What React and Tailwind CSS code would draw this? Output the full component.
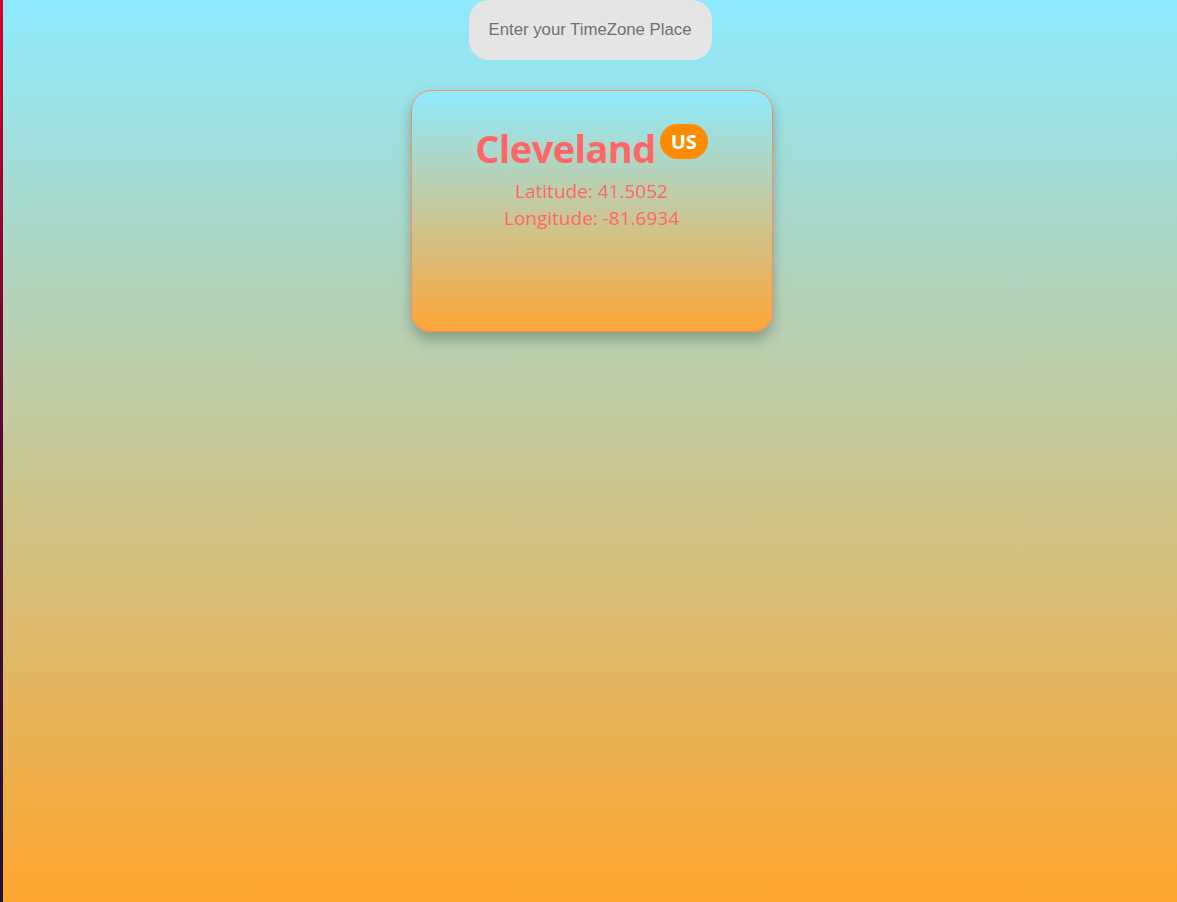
import React, { useState } from 'react';

const App = () => {
    const [place, setPlace] = useState('');

    return (
        <div className="flex min-h-[902px] w-full">
            {/* thin edge on the left */}
            <div className="w-[3px] shrink-0 bg-[linear-gradient(to_bottom,#d8002e,#5a0a2e_45%,#181232)]" />

            <div className="flex flex-1 flex-col items-center bg-[linear-gradient(to_bottom,#8eeafe,#ffa62e)]">
                <input
                    type="text"
                    value={place}
                    onChange={(e) => setPlace(e.target.value)}
                    placeholder="Enter your TimeZone Place"
                    className="h-[60px] w-[243px] rounded-[20px] bg-[#e5e5e5] px-5 text-[16.75px] text-[#444] placeholder-[#707070] outline-none"
                    style={{ fontFamily: '"Liberation Sans", Arial, sans-serif' }}
                />

                <div className="ml-[3px] mt-[30px] flex h-[242px] w-[362px] flex-col items-center rounded-[20px] border border-[#ff8a5c] bg-[linear-gradient(to_bottom,#8eeafe,#ffa638)] pt-[33px] shadow-[0_8px_14px_rgba(0,0,0,0.25)] [font-family:'Open_Sans',sans-serif]">
                    <div className="flex items-start">
                        <h1 className="mt-[2px] text-[38px] font-bold leading-[44px] tracking-[-0.6px] text-[#ff6767]">Cleveland</h1>
                        <span className="ml-[4px] flex h-[35px] items-center rounded-full bg-[#ff8c00] px-[11px] text-[20px] font-bold text-white">US</span>
                    </div>
                    <p className="mt-[8px] text-[19px] leading-[27px] text-[#ff6767]">Latitude: 41.5052</p>
                    <p className="text-[19px] leading-[27px] text-[#ff6767]">Longitude: -81.6934</p>
                </div>
            </div>
        </div>
    );
};

export default App;
